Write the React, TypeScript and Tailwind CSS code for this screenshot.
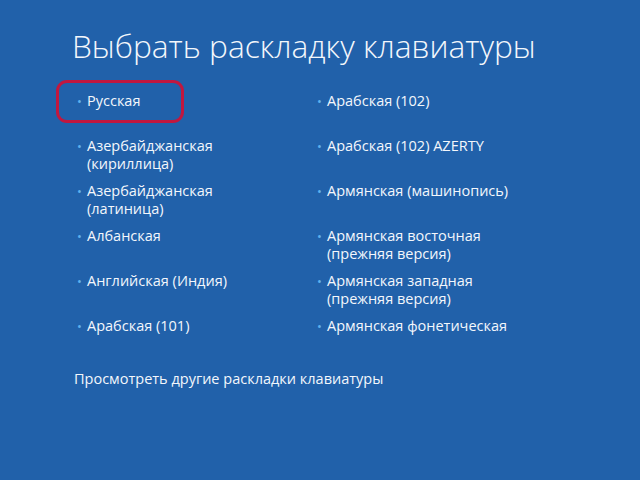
import React from "react";

const left = [
  ["Русская"],
  ["Азербайджанская", "(кириллица)"],
  ["Азербайджанская", "(латиница)"],
  ["Албанская"],
  ["Английская (Индия)"],
  ["Арабская (101)"],
];
const right = [
  ["Арабская (102)"],
  ["Арабская (102) AZERTY"],
  ["Армянская (машинопись)"],
  ["Армянская восточная", "(прежняя версия)"],
  ["Армянская западная", "(прежняя версия)"],
  ["Армянская фонетическая"],
];

function Item({ lines, highlight }: { lines: string[]; highlight?: boolean }) {
  return (
    <div className="relative flex h-[45px] items-start">
      {highlight && (
        <div className="absolute left-[-21px] top-[-12px] h-[43px] w-[128px] rounded-[11px] border-[3px] border-[#c1173f]" />
      )}
      <span className="w-[10px] text-[13px] leading-[18px] text-[#5fb2ef]">•</span>
      <div className="text-[14.5px] leading-[18px] text-[#f3f7fc]">
        {lines.map((l, i) => (
          <div key={i}>{l}</div>
        ))}
      </div>
    </div>
  );
}

export default function App() {
  return (
    <div
      className="h-[480px] w-[640px] overflow-hidden bg-[#2161aa]"
      style={{ fontFamily: '"Open Sans", "Noto Sans", sans-serif' }}
    >
      <div className="pl-[72px] pt-[24px] text-[31.7px] font-light leading-[44px] text-[#f3f7fc]">
        Выбрать раскладку клавиатуры
      </div>
      <div className="mt-[24px] grid grid-cols-[240px_240px] pl-[77px]">
        <div className="flex flex-col">
          {left.map((l, i) => (
            <Item key={i} lines={l} highlight={i === 0} />
          ))}
        </div>
        <div className="flex flex-col">
          {right.map((l, i) => (
            <Item key={i} lines={l} />
          ))}
        </div>
      </div>
      <div className="mt-[8px] pl-[74px] text-[14.5px] leading-[18px] text-[#f3f7fc]">
        Просмотреть другие раскладки клавиатуры
      </div>
    </div>
  );
}
